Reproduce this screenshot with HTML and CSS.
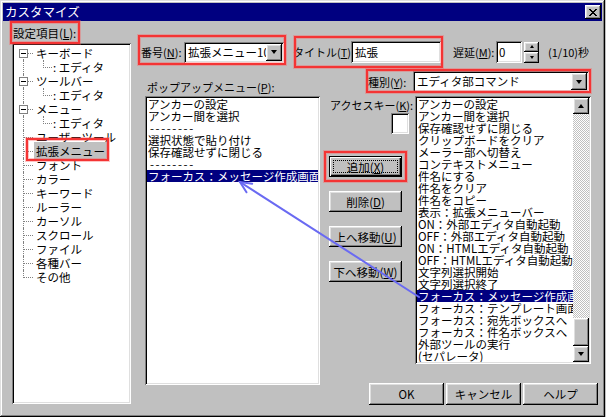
FILE: index.html
```html
<!DOCTYPE html>
<html lang="ja">
<head>
<meta charset="utf-8">
<title>カスタマイズ</title>
<link rel="stylesheet" href="styles.css">
</head>
<body>
<div class="win">
  <div class="titlebar">
    <span class="title">カスタマイズ</span>
    <span class="close"><svg width="8" height="7" viewBox="0 0 8 7"><path d="M0 0h2v1h1v1h2v-1h1v-1h2v1h-1v1h-1v1h-1v1h1v1h1v1h1v1h-2v-1h-1v-1h-2v1h-1v1h-2v-1h1v-1h1v-1h1v-1h-1v-1h-1v-1h-1z" fill="#000"/></svg></span>
  </div>
  <div class="body">
    <div class="leftcol">
      <div class="lbl setlbl">設定項目(<u>L</u>):</div>
      <div class="tree fld">
        <div class="tn first hasbox"><span class="bx"></span><span class="tx">キーボード</span></div>
        <div class="tn child"><span class="cl"></span><span class="tx">: エディタ</span></div>
        <div class="tn hasbox"><span class="bx"></span><span class="tx">ツールバー</span></div>
        <div class="tn child"><span class="cl"></span><span class="tx">: エディタ</span></div>
        <div class="tn hasbox"><span class="bx"></span><span class="tx">メニュー</span></div>
        <div class="tn child"><span class="cl"></span><span class="tx">: エディタ</span></div>
        <div class="tn leaf"><span class="tx">ユーザーツール</span></div>
        <div class="tn leaf"><span class="tx sel">拡張メニュー</span></div>
        <div class="tn leaf"><span class="tx">フォント</span></div>
        <div class="tn leaf"><span class="tx">カラー</span></div>
        <div class="tn leaf"><span class="tx">キーワード</span></div>
        <div class="tn leaf"><span class="tx">ルーラー</span></div>
        <div class="tn leaf"><span class="tx">カーソル</span></div>
        <div class="tn leaf"><span class="tx">スクロール</span></div>
        <div class="tn leaf"><span class="tx">ファイル</span></div>
        <div class="tn leaf"><span class="tx">各種バー</span></div>
        <div class="tn leaf last"><span class="tx">その他</span></div>
      </div>
    </div>
    <div class="rightcol">
      <div class="row1">
        <span class="lbl w-num">番号(<u>N</u>):</span>
        <div class="combo fld c-num"><span class="val">拡張メニュー10</span><span class="dd btn"><i class="tri"></i></span></div>
        <span class="lbl w-title">タイトル(<u>T</u>):</span>
        <div class="inp fld i-title">拡張</div>
        <span class="lbl w-delay">遅延(<u>M</u>):</span>
        <div class="inp fld i-delay">0</div>
        <div class="spin"><span class="btn sp"><i class="tri-up s"></i></span><span class="btn sp"><i class="tri s"></i></span></div>
        <span class="lbl unit">(1/10)秒</span>
      </div>
      <div class="row2">
        <span class="lbl popl">ポップアップメニュー(<u>P</u>):</span>
        <div class="kind">
          <span class="lbl w-kind">種別(<u>Y</u>):</span>
          <div class="combo fld c-kind"><span class="val">エディタ部コマンド</span><span class="dd btn"><i class="tri"></i></span></div>
        </div>
      </div>
      <div class="row3">
        <div class="list fld popup">
          <div class="it">アンカーの設定</div>
          <div class="it">アンカー間を選択</div>
          <div class="it dash">--------</div>
          <div class="it">選択状態で貼り付け</div>
          <div class="it">保存確認せずに閉じる</div>
          <div class="it dash">--------</div>
          <div class="it on">フォーカス：メッセージ作成画面へ</div>
        </div>
        <div class="rb">
          <div class="rbtop">
            <div class="mid">
              <span class="lbl akl">アクセスキー(<u>K</u>):</span>
              <div class="inp fld akey"></div>
              <div class="btn mb def first-b"><span>追加(<u>X</u>)</span></div>
              <div class="btn mb"><span>削除(<u>D</u>)</span></div>
              <div class="btn mb"><span>上へ移動(<u>U</u>)</span></div>
              <div class="btn mb"><span>下へ移動(<u>W</u>)</span></div>
            </div>
            <div class="list fld kinds">
              <div class="rows">
                <div class="it">アンカーの設定</div>
                <div class="it">アンカー間を選択</div>
                <div class="it">保存確認せずに閉じる</div>
                <div class="it">クリップボードをクリア</div>
                <div class="it">メーラー部へ切替え</div>
                <div class="it">コンテキストメニュー</div>
                <div class="it">件名にする</div>
                <div class="it">件名をクリア</div>
                <div class="it">件名をコピー</div>
                <div class="it">表示：拡張メニューバー</div>
                <div class="it">ON：外部エディタ自動起動</div>
                <div class="it">OFF：外部エディタ自動起動</div>
                <div class="it">ON：HTMLエディタ自動起動</div>
                <div class="it">OFF：HTMLエディタ自動起動</div>
                <div class="it">文字列選択開始</div>
                <div class="it">文字列選択終了</div>
                <div class="it on">フォーカス：メッセージ作成画面へ</div>
                <div class="it">フォーカス：テンプレート画面へ</div>
                <div class="it">フォーカス：宛先ボックスへ</div>
                <div class="it">フォーカス：件名ボックスへ</div>
                <div class="it">外部ツールの実行</div>
                <div class="it">(セパレータ)</div>
              </div>
              <div class="vscroll">
                <span class="btn sb"><i class="tri-up"></i></span>
                <span class="track"></span>
                <span class="btn thumb"></span>
                <span class="btn sb"><i class="tri"></i></span>
              </div>
            </div>
          </div>
          <div class="dlgbtns">
            <div class="btn db">OK</div>
            <div class="btn db">キャンセル</div>
            <div class="btn db">ヘルプ</div>
          </div>
        </div>
      </div>
    </div>
  </div>

  <div class="mark m1"></div>
  <div class="mark m2"></div>
  <div class="mark m3"></div>
  <div class="mark m4"></div>
  <div class="mark m5"></div>
  <div class="mark m6"></div>
  <svg class="arrow" width="605" height="417" viewBox="0 0 605 417">
    <g stroke="#6a6af2" stroke-width="2" fill="none" stroke-linecap="round">
      <line x1="419" y1="297" x2="240" y2="182"/>
      <polyline points="246.5,192.3 240,182 252.2,183.7"/>
    </g>
  </svg>
</div>
</body>
</html>
```

FILE: styles.css
```css
* { box-sizing: border-box; }
html, body { margin: 0; padding: 0; background: #c0c0c0; }
body {
  font-family: "Noto Sans CJK JP", "Noto Sans", sans-serif;
  font-size: 11.5px;
  color: #000;
}
u { text-decoration: underline; text-underline-offset: 1px; }

.win {
  position: relative;
  width: 605px;
  height: 417px;
  padding: 3px;
  background: #c0c0c0;
  box-shadow: inset -1px -1px #000, inset 1px 1px #dfdfdf, inset -2px -2px #808080, inset 2px 2px #fff;
  display: flex;
  flex-direction: column;
}

/* title bar */
.titlebar {
  height: 18px;
  background: #000080;
  color: #fff;
  display: flex;
  align-items: center;
  justify-content: space-between;
  padding: 0 1px 0 2px;
}
.title { font-size: 12.5px; line-height: 18px; }
.close {
  width: 16px;
  height: 14px;
  background: #c0c0c0;
  box-shadow: inset -1px -1px #000, inset 1px 1px #fff, inset -2px -2px #808080, inset 2px 2px #dfdfdf;
  display: flex;
  align-items: center;
  justify-content: center;
  padding-right: 1px;
}

/* common */
.lbl { font-size: 11px; line-height: 12px; white-space: nowrap; }
.fld {
  background: #fff;
  box-shadow: inset 1px 1px #808080, inset -1px -1px #fff, inset 2px 2px #000, inset -2px -2px #dfdfdf;
}
.btn {
  background: #c0c0c0;
  box-shadow: inset -1px -1px #000, inset 1px 1px #fff, inset -2px -2px #808080, inset 2px 2px #dfdfdf;
  display: flex;
  align-items: center;
  justify-content: center;
}
.tri {
  display: block;
  width: 1px;
  height: 0;
  border-left: 3px solid transparent;
  border-right: 3px solid transparent;
  border-top: 4px solid #000;
}
.tri-up {
  display: block;
  width: 1px;
  height: 0;
  border-left: 3px solid transparent;
  border-right: 3px solid transparent;
  border-bottom: 4px solid #000;
}
.tri.s { border-left-width: 2px; border-right-width: 2px; border-top-width: 3px; }
.tri-up.s { border-left-width: 2px; border-right-width: 2px; border-bottom-width: 3px; }

.body { display: flex; flex: 1; }

/* left column */
.leftcol { margin-left: 9px; width: 119px; }
.setlbl { margin-top: 6px; margin-left: 1px; font-size: 11.5px; }
.tree {
  margin-top: 4px;
  height: 361px;
  padding: 3px 2px 2px 2px;
}
.tn {
  position: relative;
  height: 14px;
  line-height: 14px;
  padding-left: 22px;
  white-space: nowrap;
}
.tn::before {
  content: "";
  position: absolute;
  left: 9px;
  top: 0;
  height: 14px;
  border-left: 1px dotted #808080;
}
.tn.first::before { top: 7px; height: 7px; }
.tn.last::before { height: 8px; }
.tn.leaf::after {
  content: "";
  position: absolute;
  left: 10px;
  top: 7px;
  width: 9px;
  border-top: 1px dotted #808080;
}
.tn.hasbox::after {
  content: "";
  position: absolute;
  left: 14px;
  top: 7px;
  width: 5px;
  border-top: 1px dotted #808080;
}
.bx {
  position: absolute;
  left: 5px;
  top: 3px;
  width: 9px;
  height: 9px;
  border: 1px solid #808080;
  background: #fff;
  z-index: 1;
}
.bx::after {
  content: "";
  position: absolute;
  left: 1px;
  top: 3px;
  width: 5px;
  height: 1px;
  background: #000;
}
.tn.child { padding-left: 39px; }
.cl {
  position: absolute;
  left: 29px;
  top: 0;
  width: 9px;
  height: 8px;
  border-left: 1px dotted #808080;
  border-bottom: 1px dotted #808080;
}
.tx.sel { background: #c0c0c0; padding: 1px 2px; margin-left: -2px; }

/* right column */
.rightcol { flex: 1; display: flex; flex-direction: column; }
.row1 {
  margin-top: 20px;
  height: 22px;
  display: flex;
  align-items: center;
  padding-left: 10px;
}
.w-num { width: 43px; }
.combo { display: flex; padding: 2px; height: 21px; }
.combo .val {
  flex: 1;
  overflow: hidden;
  white-space: nowrap;
  line-height: 17px;
  padding-left: 2px;
}
.combo .dd { width: 16px; height: 17px; flex: none; }
.c-num { width: 100px; }
.w-title { width: 58px; margin-left: 9px; }
.inp { height: 22px; line-height: 22px; padding-left: 4px; white-space: nowrap; }
.i-title { width: 90px; }
.w-delay { width: 43px; margin-left: 12px; }
.i-delay { width: 26px; padding-left: 3px; }
.spin { margin-left: 2px; display: flex; flex-direction: column; width: 15px; height: 21px; }
.spin .sp { height: 10px; }
.spin .sp + .sp { height: 11px; }
.unit { margin-left: 9px; }

.row2 {
  margin-top: 8px;
  height: 22px;
  display: flex;
  justify-content: space-between;
}
.popl { align-self: flex-end; margin-left: 16px; }
.kind { display: flex; align-items: center; height: 21px; margin-right: 13px; }
.w-kind { width: 46px; padding-left: 1px; }
.c-kind { width: 176px; }

.row3 { margin-top: 3px; height: 309px; display: flex; }
.list { padding: 2px; overflow: hidden; }
.it {
  height: 12px;
  line-height: 12px;
  padding-left: 1px;
  white-space: nowrap;
  overflow: hidden;
}
.it.on { background: #000080; color: #fff; }
.it.dash { letter-spacing: 1.6px; padding-left: 3px; }
.popup { margin-left: 14px; width: 175px; height: 289px; align-self: flex-start; }

.rb { flex: 1; display: flex; flex-direction: column; }
.rbtop { display: flex; height: 268px; }
.mid { margin-left: 9px; width: 79px; display: flex; flex-direction: column; }
.akl { margin-top: 3px; margin-left: 1px; }
.akey { margin-top: 2px; margin-left: 62px; width: 18px; height: 21px; }
.mb { width: 73px; height: 21px; margin-top: 14px; position: relative; line-height: 12px; }
.mb.first-b { margin-top: 22px; }
.btn.def {
  box-shadow: inset 0 0 0 1px #000, inset 2px 2px #fff, inset -2px -2px #000, inset -3px -3px #808080;
}
.btn.def::after {
  content: "";
  position: absolute;
  left: 4px;
  top: 4px;
  right: 4px;
  bottom: 4px;
  border: 1px dotted #000;
}

.kinds { margin-left: 7px; width: 176px; height: 268px; display: flex; }
.rows { flex: 1; overflow: hidden; }
.vscroll { width: 16px; display: flex; flex-direction: column; }
.vscroll .sb { height: 16px; flex: none; }
.track {
  flex: 1;
  background-color: #fff;
  background-image: repeating-conic-gradient(#c0c0c0 0 25%, #fff 0 50%);
  background-size: 2px 2px;
}
.thumb { height: 28px; flex: none; }

.dlgbtns {
  margin-top: 19px;
  display: flex;
  justify-content: flex-end;
  gap: 2px;
  padding-right: 4px;
}
.db { width: 75px; height: 22px; line-height: 12px; }

/* annotation overlays */
.mark {
  position: absolute;
  border: 2px solid #f43434;
  box-shadow: 0 0 0 1px rgba(255, 90, 90, 0.35), inset 0 0 0 1px rgba(255, 90, 90, 0.35);
  pointer-events: none;
}
.m1 { left: 10px; top: 21px; width: 70px; height: 23px; }
.m2 { left: 26px; top: 138px; width: 83px; height: 23px; }
.m3 { left: 138px; top: 35px; width: 148px; height: 30px; }
.m4 { left: 294px; top: 36px; width: 149px; height: 32px; }
.m5 { left: 366px; top: 69px; width: 225px; height: 24px; }
.m6 { left: 324px; top: 151px; width: 83px; height: 31px; }
.arrow { position: absolute; left: 0; top: 0; pointer-events: none; }
```
